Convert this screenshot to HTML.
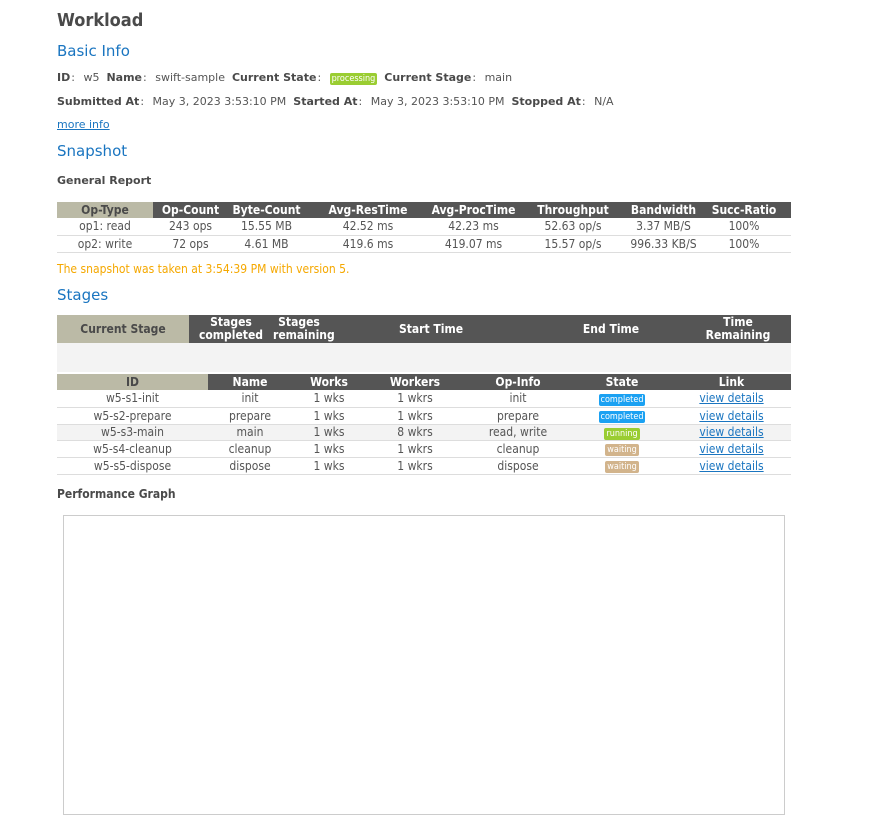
<!DOCTYPE html>
<html><head><meta charset="utf-8"><style>
*{box-sizing:border-box}
body{margin:0;background:#fff;font-family:"DejaVu Sans","Liberation Sans",sans-serif;color:#555;font-size:11px;width:886px;height:792px;overflow:hidden;position:relative}
.a{position:absolute;white-space:nowrap}
h1{position:absolute;left:57px;top:10px;margin:0;font-size:18px;font-weight:bold;color:#4a4a4a;font-family:"DejaVu Sans Condensed","DejaVu Sans",sans-serif}
.h2{font-size:15px;color:#1a75c0}
b{color:#4a4a4a}
.sep{margin:0 5px 0 1px}
.badge{display:inline-block;color:#fff;font-family:"DejaVu Sans Condensed","DejaVu Sans",sans-serif;font-size:9px;line-height:12px;padding:0 2px;border-radius:2px}
table{position:absolute;left:57px;width:734px;border-collapse:collapse;font-family:"DejaVu Sans Condensed","DejaVu Sans",sans-serif;font-size:12px;table-layout:fixed}
th{background:#555;color:#fff;font-weight:bold;text-align:center;padding:0}
th.f{background:#bbbaa6;color:#4a4a4a}
td{text-align:center;padding:0;border-bottom:1px solid #ddd;color:#555}
a{color:#1a75c0;text-decoration:underline}
</style></head><body>
<h1>Workload</h1>
<div class="a h2" style="left:57px;top:42px">Basic Info</div>
<div class="a" style="left:57px;top:71px"><b>ID</b><span class="sep">:</span> w5 &nbsp;<b>Name</b><span class="sep">:</span> swift-sample &nbsp;<b>Current State</b><span class="sep">:</span> <span class="badge" style="background:#9acd32">processing</span> &nbsp;<b>Current Stage</b><span class="sep">:</span> main</div>
<div class="a" style="left:57px;top:95px"><b>Submitted At</b><span class="sep">:</span> May 3, 2023 3:53:10 PM &nbsp;<b>Started At</b><span class="sep">:</span> May 3, 2023 3:53:10 PM &nbsp;<b>Stopped At</b><span class="sep">:</span> N/A</div>
<div class="a" style="left:57px;top:118px"><a>more info</a></div>
<div class="a h2" style="left:57px;top:142px">Snapshot</div>
<div class="a" style="left:57px;top:174px"><b>General Report</b></div>
<table style="top:202px">
<colgroup><col style="width:96px"><col style="width:75px"><col style="width:77px"><col style="width:126px"><col style="width:85px"><col style="width:114px"><col style="width:67px"><col style="width:94px"></colgroup>
<tr style="height:16px"><th class="f">Op-Type</th><th>Op-Count</th><th>Byte-Count</th><th>Avg-ResTime</th><th>Avg-ProcTime</th><th>Throughput</th><th>Bandwidth</th><th>Succ-Ratio</th></tr>
<tr style="height:17px"><td>op1: read</td><td>243 ops</td><td>15.55 MB</td><td>42.52 ms</td><td>42.23 ms</td><td>52.63 op/s</td><td>3.37 MB/S</td><td>100%</td></tr>
<tr style="height:17px"><td>op2: write</td><td>72 ops</td><td>4.61 MB</td><td>419.6 ms</td><td>419.07 ms</td><td>15.57 op/s</td><td>996.33 KB/S</td><td>100%</td></tr>
</table>
<div class="a" style="left:57px;top:262px;font-size:12px;color:#f5a800;font-family:'DejaVu Sans Condensed','DejaVu Sans',sans-serif">The snapshot was taken at 3:54:39 PM with version 5.</div>
<div class="a h2" style="left:57px;top:286px">Stages</div>
<table style="top:315px">
<colgroup><col style="width:132px"><col style="width:84px"><col style="width:52px"><col style="width:212px"><col style="width:148px"><col style="width:106px"></colgroup>
<tr style="height:28px;line-height:13px"><th class="f">Current Stage</th><th>Stages<br>completed</th><th>Stages<br>remaining</th><th>Start Time</th><th>End Time</th><th>Time<br>Remaining</th></tr>
<tr style="height:29px;background:#f3f3f3"><td style="border:0"></td><td style="border:0"></td><td style="border:0"></td><td style="border:0"></td><td style="border:0"></td><td style="border:0"></td></tr>
</table>
<table style="top:374px">
<colgroup><col style="width:151px"><col style="width:84px"><col style="width:74px"><col style="width:98px"><col style="width:108px"><col style="width:100px"><col style="width:119px"></colgroup>
<tr style="height:16px"><th class="f">ID</th><th>Name</th><th>Works</th><th>Workers</th><th>Op-Info</th><th>State</th><th>Link</th></tr>
<tr style="height:17px"><td>w5-s1-init</td><td>init</td><td>1 wks</td><td>1 wkrs</td><td>init</td><td><span class="badge" style="background:#1ba1f2">completed</span></td><td><a>view details</a></td></tr>
<tr style="height:17px"><td>w5-s2-prepare</td><td>prepare</td><td>1 wks</td><td>1 wkrs</td><td>prepare</td><td><span class="badge" style="background:#1ba1f2">completed</span></td><td><a>view details</a></td></tr>
<tr style="height:16px;background:#f3f3f3"><td>w5-s3-main</td><td>main</td><td>1 wks</td><td>8 wkrs</td><td>read, write</td><td><span class="badge" style="background:#9acd32">running</span></td><td><a>view details</a></td></tr>
<tr style="height:17px"><td>w5-s4-cleanup</td><td>cleanup</td><td>1 wks</td><td>1 wkrs</td><td>cleanup</td><td><span class="badge" style="background:#d2b48c">waiting</span></td><td><a>view details</a></td></tr>
<tr style="height:17px"><td>w5-s5-dispose</td><td>dispose</td><td>1 wks</td><td>1 wkrs</td><td>dispose</td><td><span class="badge" style="background:#d2b48c">waiting</span></td><td><a>view details</a></td></tr>
</table>
<div class="a" style="left:57px;top:487px;font-family:'DejaVu Sans Condensed','DejaVu Sans',sans-serif;font-size:12px"><b>Performance Graph</b></div>
<div class="a" style="left:63px;top:515px;width:722px;height:300px;border:1px solid #ccc"></div>
</body></html>
